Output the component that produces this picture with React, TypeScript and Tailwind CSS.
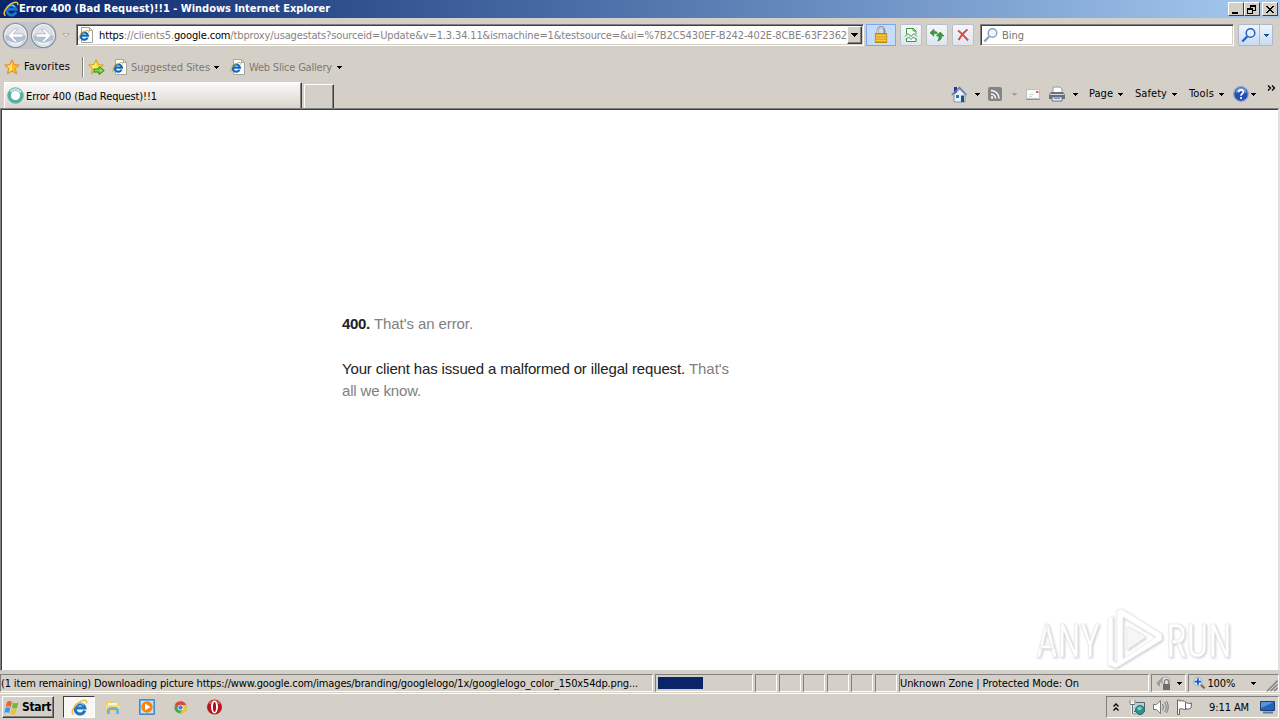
import React, { useLayoutEffect, useRef, useState } from 'react';

const ADDRESS_REST = '/tbproxy/usagestats?sourceid=Update&v=1.3.34.11&ismachine=1&testsource=&ui=%7B2C5430EF-B242-402E-8CBE-63F2362';
const SMALL_PANES = [0, 1, 2, 3, 4, 5];

// Spreads its letters so that the text fills a fixed width
const Label = (props: any) => {
  const { width, className = '', children } = props;
  const ref = useRef<HTMLSpanElement>(null);
  const [spacing, setSpacing] = useState(0);

  useLayoutEffect(() => {
    const el = ref.current;
    if (el) {
      const count = (el.textContent || '').length;
      setSpacing((width - (el.getBoundingClientRect().width - spacing * count)) / count);
    }
  }, [width]);

  return (
    <span
      ref={ref}
      className={`inline-block shrink-0 whitespace-pre ${className}`}
      style={{ letterSpacing: `${spacing}px` }}
    >
      {children}
    </span>
  );
};

const Caret = ({ className = '' }: any) => (
  <svg className={`shrink-0 ${className}`} width="6" height="3" viewBox="0 0 6 3" shapeRendering="crispEdges">
    <path d="M0 0h5v1H4v1H3v1H2V2H1V1H0z" fill="currentColor" />
  </svg>
);

const IELogo = ({ size = 16, className = '' }: any) => (
  <svg className={`shrink-0 ${className}`} width={size} height={size} viewBox="0 0 16 16" fill="none">
    <path d="M13 10.8A4.700 4.700 0 1 1 13.100 8.400H5" stroke="#1d74c8" strokeWidth="2.800" />
    <path d="M4.200 6.600A4.500 4.500 0 0 1 12 5.800" stroke="#6cc4f6" strokeWidth="1.300" />
    <path d="M2.600 14.600C-.8 13 2.500 6.500 7.500 3.200 11.400.6 15.600.1 14.600 4.200" stroke="#edc23c" strokeWidth="1.500" />
  </svg>
);

const IEPage = ({ className = '' }: any) => (
  <svg className={`shrink-0 ${className}`} width="16" height="16" viewBox="0 0 16 16" fill="none">
    <path d="M3.500.5h8l3 3v12h-11z" fill="#fdfdfd" stroke="#a5a5a0" />
    <path d="M11.500.5v3h3" stroke="#a5a5a0" />
    <path d="M9.600 10.600A3.600 3.600 0 1 1 9.900 8.600H3.400" stroke="#1767b3" strokeWidth="2.200" />
    <path d="M1.400 13.300C-.6 11.800 2.200 7 5.700 5c3.300-2 6-2 5 .5" stroke="#dfab20" />
  </svg>
);

const Star = ({ plus = false }: any) => (
  <svg className="shrink-0" width="17" height="16" viewBox="0 0 17 16">
    <path d="M8 .8l2.100 4.800 5.200.5-3.900 3.500 1.200 5.200L8 12.100l-4.600 2.700 1.200-5.200L.7 6.100l5.200-.5z" fill={plus ? '#ffe04a' : '#fdb92c'} stroke={plus ? '#cfa310' : '#df8c22'} />
    <path d="M8 2.800v8l-3.200 2 .9-3.700L3 6.800l3.500-.4z" fill="#ffe780" />
    {plus && <path d="M6 10h5V7.500l5.300 4-5.300 4V13H6z" fill="#7ddb4c" stroke="#26881c" />}
  </svg>
);

const TitleButton = ({ children, className = '' }: any) => (
  <div className={`flex h-[14px] w-4 items-center justify-center border border-t-white border-l-white border-r-[#404040] border-b-[#404040] bg-[#d4d0c8] ${className}`}>
    <svg width="12" height="11" viewBox="0 0 12 11" shapeRendering="crispEdges" fill="none" stroke="#000">{children}</svg>
  </div>
);

const TitleBar = () => (
  <div className="flex h-[18px] items-center bg-linear-to-r from-[#0a246a] to-[#a6caf0] pl-[3px] text-white">
    <IELogo />
    <Label width={311} className="font-bold">Error 400 (Bad Request)!!1 - Windows Internet Explorer</Label>
    <div className="mr-[2px] ml-auto flex">
      <TitleButton><path d="M2 9h6" strokeWidth="2" /></TitleButton>
      <TitleButton>
        <path d="M4 1h6M4 2h6M4.500 1v3M9.500 1v6M7 6.500h3M1 4h6M1 5h6M1.500 4v6M6.500 4v6M1 9.500h6" />
      </TitleButton>
      <TitleButton className="ml-[2px]">
        <path d="M2 2l7 7M3 2l7 7M9 2L2 9M10 2L3 9" shapeRendering="auto" />
      </TitleButton>
    </div>
  </div>
);

const NavArrow = ({ flip = false }: any) => (
  <svg className={`shrink-0 ${flip ? '-scale-x-100' : ''}`} width="27" height="27" viewBox="0 0 27 27">
    <circle cx="13.500" cy="13.500" r="12" fill="#f3f5f8" stroke="#858c99" strokeWidth="1.200" />
    <path d="M3 13.500a10.500 10.500 0 0 1 21 0z" fill="#dde1e7" />
    <path d="M3 13.500a10.500 10.500 0 0 0 21 0z" fill="#b4bfcf" />
    <path d="M5 18a9.300 9.300 0 0 0 17 0q-8.500 5-17 0z" fill="#e3f1fb" />
    <path d="M5.800 13.500l6.800-6.400h3.200l-4.600 4.700H21v3.400h-9.800l4.600 4.700h-3.200z" fill="#fff" stroke="#a0abbb" strokeWidth=".7" />
  </svg>
);

const ToolButton = ({ children, className = '' }: any) => (
  <div className={`flex h-[22px] w-[22px] shrink-0 items-center justify-center rounded-[2px] border border-[#b8c1ca] bg-linear-to-b from-[#f4f7fa] to-[#dfe6ef] ${className}`}>
    {children}
  </div>
);

const Magnifier = ({ color = '#8ca3b8', fill = '#edf6fc' }: any) => (
  <svg className="shrink-0" width="16" height="16" viewBox="0 0 16 16" fill="none" stroke={color}>
    <path d="M6.200 9.500L1.300 14.500" strokeWidth="2.300" />
    <circle cx="9.500" cy="6" r="4.300" fill={fill} strokeWidth="1.500" />
    <path d="M7.200 6a2.400 2.400 0 0 1 2.300-2.400" stroke="#fff" />
  </svg>
);

const AddressRow = () => (
  <div className="flex h-[34px] items-center pl-[2px]">
    <div className="flex gap-[1px] rounded-full bg-[#c3c4c8]">
      <NavArrow />
      <NavArrow flip />
    </div>
    <svg className="ml-[5px] shrink-0" width="8" height="5" viewBox="0 0 8 5">
      <path d="M.5.5h7L4 4z" fill="#e6e3dd" stroke="#b3afa7" />
    </svg>
    <div className="ml-[6px] flex h-[22px] w-[788px] shrink-0 items-center border border-t-[#808080] border-l-[#808080] border-r-white border-b-white bg-white pl-px shadow-[inset_1px_1px_#404040,inset_-1px_-1px_#d4d0c8]">
      <IEPage />
      <Label width={748} className="ml-[5px] pt-[2px] text-[#85837f]">
        <span className="text-black">https</span>
        ://clients5.
        <span className="text-black">google.com</span>
        {ADDRESS_REST}
      </Label>
      <div className="mr-px ml-auto flex h-[18px] w-[15px] items-center justify-center border border-t-white border-l-white border-r-[#404040] border-b-[#404040] bg-[#d4d0c8] shadow-[inset_-1px_-1px_#808080]">
        <svg width="7" height="4" viewBox="0 0 7 4" shapeRendering="crispEdges">
          <path d="M0 0h7v1H6v1H5v1H4v1H3V3H2V2H1V1H0z" />
        </svg>
      </div>
    </div>
    <div className="ml-[2px] flex h-[22px] w-[30px] shrink-0 items-center justify-center border border-[#7aa7f0] bg-[#c5dcfb]">
      <svg width="14" height="18" viewBox="0 0 16 18" preserveAspectRatio="none" fill="none">
        <path d="M4 9V5a4 4 0 0 1 8 0v4" stroke="#8d8c80" strokeWidth="2.200" />
        <path d="M4 8V5a4 4 0 0 1 7-2.500" stroke="#e2dfd2" />
        <rect x="1.500" y="7.500" width="13" height="9" fill="#e6a817" stroke="#b98818" />
        <path d="M2 9.500h12M2 12h12M2 14.500h12" stroke="#f8cf50" />
      </svg>
    </div>
    <ToolButton className="ml-1">
      <svg width="14" height="16" viewBox="0 0 14 16" fill="none" stroke="#319a3a">
        <path d="M2.500 7V1.500h7L12 4v3M2.500 11v3.500H12V11" fill="#fff" />
        <path d="M9 1.500V4h3" />
        <path d="M1 9.500l3-3 3 3 3-3 3 3M2 12.500l2.500-2.500 2.500 2.500 2.500-2.500 2.500 2.500" />
      </svg>
    </ToolButton>
    <ToolButton className="ml-1">
      <svg width="16" height="16" viewBox="0 0 16 16">
        <path d="M1 5.700L4.800 2v2.200c2.500-.3 3.500.8 3.500 3C7.500 6.300 6.600 6.300 4.800 6.500v2.700z" fill="#369d37" stroke="#22722a" strokeWidth=".5" />
        <path d="M11.200 5l3.800 4h-2.300c.1 2.800-1.300 4.700-4.200 5 1.400-1.300 1.400-2.700 1.300-5H7.400z" fill="#369d37" stroke="#22722a" strokeWidth=".5" />
      </svg>
    </ToolButton>
    <ToolButton className="ml-1">
      <svg width="14" height="14" viewBox="0 0 14 14" fill="none">
        <path d="M2 2.500c3 2 6 5.500 10 10M11.500 1.500C8 4 5 8 2.500 12" stroke="#d34848" strokeWidth="2" />
      </svg>
    </ToolButton>
    <div className="ml-[6px] flex h-[22px] w-[254px] shrink-0 items-center border border-t-[#808080] border-l-[#808080] border-r-white border-b-white bg-white pl-[2px] shadow-[inset_1px_1px_#404040,inset_-1px_-1px_#d4d0c8]">
      <Magnifier />
      <Label width={22} className="ml-[3px] pt-[2px] text-[#77736d]">Bing</Label>
    </div>
    <div className="ml-[4px] flex h-[22px] w-[35px] items-center rounded-[2px] border border-[#adb9cb] bg-linear-to-b from-[#eff4fb] to-[#cbdaf0]">
      <div className="flex h-full w-[21px] items-center justify-center border-r border-[#adb9cb]">
        <Magnifier color="#2460c4" fill="#e3effd" />
      </div>
      <Caret className="ml-[4px] text-[#174b9b]" />
    </div>
  </div>
);

const FavoritesRow = () => (
  <div className="flex h-[30px] items-center pl-1">
    <Star />
    <Label width={46} className="ml-[3px]">Favorites</Label>
    <div className="ml-[12px] h-5 w-[2px] border-l border-[#808080] bg-white" />
    <div className="ml-[4px]"><Star plus /></div>
    <IEPage className="ml-[7px]" />
    <Label width={79} className="ml-[3px] pt-px text-[#7c7973]">Suggested Sites</Label>
    <Caret className="ml-[4px]" />
    <IEPage className="ml-[10px]" />
    <Label width={83} className="ml-[3px] pt-px text-[#7c7973]">Web Slice Gallery</Label>
    <Caret className="ml-[5px]" />
  </div>
);

const CommandBar = () => (
  <div className="mr-[4px] mb-px ml-auto flex h-[26px] items-center">
    <svg width="16" height="17" viewBox="0 0 16 17">
      <path d="M3 8.500L8.500 3 14 8.500V16H3z" fill="#eaf1f8" stroke="#7996b5" />
      <path d="M3 1h3v5L3 8z" fill="#22359b" />
      <path d="M.8 9L8.500 1.500 15.500 9" fill="none" stroke="#5f80a8" strokeWidth="1.500" />
      <path d="M5 9h3v3H5z" fill="#3c6fa3" />
      <path d="M10 9.500h3V16h-3z" fill="#174f86" />
    </svg>
    <Caret className="ml-[8px]" />
    <svg className="ml-[7px]" width="14" height="14" viewBox="0 0 14 14" fill="none" stroke="#fff" strokeWidth="1.500">
      <rect width="14" height="14" rx="2" fill="#858585" stroke="none" />
      <path d="M3 7a4.500 4.500 0 0 1 4.500 4.500M3 3.500a8 8 0 0 1 8 8" />
      <circle cx="4" cy="10.500" r=".5" />
    </svg>
    <Caret className="ml-[10px] text-[#a6a29a]" />
    <svg className="ml-[8px]" width="14" height="11" viewBox="0 0 14 11">
      <path d="M.5.5h13v9H.5z" fill="#fafafa" stroke="#c2bfba" />
      <path d="M0 10.500h14" stroke="#96938e" />
      <path d="M10 2h2.500v2H10z" fill="#db6657" />
      <path d="M3 5.500h5M3 7.500h3" stroke="#d8d8d8" />
    </svg>
    <svg className="ml-[9px]" width="16" height="16" viewBox="0 0 16 16">
      <path d="M4 1h7l2 2v4H4z" fill="#fff" stroke="#929aa3" />
      <path d="M2 6h12l2 3v4H0V9z" fill="#6c7177" />
      <path d="M1 8.500h14" stroke="#d6d9dc" />
      <path d="M3 11h10v4H3z" fill="#e8edf3" stroke="#697585" />
      <path d="M5 12.500h6" stroke="#6999c4" />
    </svg>
    <Caret className="ml-[8px]" />
    <Label width={24} className="ml-[10px]">Page</Label>
    <Caret className="ml-[5px]" />
    <Label width={32} className="ml-[11px]">Safety</Label>
    <Caret className="ml-[5px]" />
    <Label width={25} className="ml-[11px]">Tools</Label>
    <Caret className="ml-[5px]" />
    <svg className="ml-[8px]" width="16" height="16" viewBox="0 0 16 16" fill="none">
      <circle cx="8" cy="8" r="7.300" fill="#254fb1" stroke="#8ba3cf" strokeWidth="1.200" />
      <path d="M2.500 7a5.500 5.500 0 0 1 11 0q-5.500-3-11 0z" fill="#7697df" />
      <path d="M5.700 6.200C5.700 3 10.500 3.300 10.400 5.900 10.300 7.700 8 7.500 8 9.700M8 11v2" stroke="#fff" strokeWidth="1.700" />
    </svg>
    <Caret className="ml-[2px]" />
    <svg className="mb-[13px] ml-[10px]" width="9" height="6" viewBox="0 0 9 6" fill="none" stroke="#000" strokeWidth="1.300">
      <path d="M1 .5L3.500 3 1 5.500M5 .5L7.500 3 5 5.500" />
    </svg>
  </div>
);

const TabRow = () => (
  <div className="flex h-[26px] items-end pl-1">
    <div className="flex h-[26px] w-[298px] items-center border-t border-r border-l border-t-white border-l-white border-r-[#404040] bg-linear-to-b from-[#fbfaf9] to-[#d9d5ce] pl-[2px] shadow-[inset_-1px_0_#808080]">
      <svg className="shrink-0" width="17" height="17" viewBox="0 0 17 17" fill="none">
        <circle cx="8.500" cy="8.500" r="6.200" fill="#fff" stroke="#4fb3a4" strokeWidth="3.200" />
        <path d="M3.500 4.800A6.200 6.200 0 0 1 14 5.500" stroke="#c0e2e0" strokeWidth="2.600" />
        <circle cx="8.500" cy="8.500" r="7.800" stroke="#6f9fae" strokeWidth=".8" />
      </svg>
      <Label width={131} className="ml-[2px] pt-[2px]">Error 400 (Bad Request)!!1</Label>
    </div>
    <div className="ml-[2px] h-[24px] w-[30px] border-t border-r border-l border-t-white border-l-white border-r-[#404040] shadow-[inset_-1px_0_#808080]" />
    <CommandBar />
  </div>
);

const Watermark = () => (
  <svg className="absolute right-0 bottom-0 overflow-visible font-['Roboto',sans-serif] drop-shadow-[1px_1px_1px_rgba(0,0,0,0.2)]" width="243" height="62" viewBox="0 0 243 62">
    <g fill="#fff" stroke="#e6e6e6" strokeWidth=".7">
      <text x="1" y="49" fontSize="46" textLength="64" lengthAdjust="spacingAndGlyphs">ANY</text>
      <text x="131" y="49" fontSize="46" textLength="66" lengthAdjust="spacingAndGlyphs">RUN</text>
      <path d="M82 2l5-1 40 25v6L86 57l-5 3-8-3V11l5-3v45l4 2zM88 9v42l33-22z" fillRule="evenodd" />
      <path d="M92 18v24l19-13z" fill="#f6f6f6" />
    </g>
  </svg>
);

const ErrorPage = () => (
  <div className="relative h-[563px] border-t border-r-2 border-b border-l border-t-[#808080] border-r-[#e3e0da] border-b-[#d4d0c8] border-l-[#808080] bg-white pt-[204px] pl-[341px] font-['Liberation_Sans',sans-serif] text-[15px] leading-[22px] text-[#808080] shadow-[inset_1px_1px_#404040]">
    <p className="mb-[23px] whitespace-nowrap">
      <Label width={28} className="font-bold text-[#222]">400.</Label>
      <Label width={99} className="ml-1">That&apos;s an error.</Label>
    </p>
    <p className="whitespace-nowrap">
      <Label width={343} className="text-[#222]">Your client has issued a malformed or illegal request.</Label>
      <Label width={40} className="ml-1">That&apos;s</Label>
    </p>
    <p><Label width={79}>all we know.</Label></p>
    <Watermark />
  </div>
);

const Pane = ({ children, className = '' }: any) => (
  <div className={`flex h-[18px] shrink-0 items-center border border-t-[#808080] border-l-[#808080] border-r-white border-b-white ${className}`}>
    {children}
  </div>
);

const StatusBar = () => (
  <div className="flex h-[22px] items-end gap-[2px] pb-px">
    <Pane className="w-[653px]">
      <Label width={637} className="pt-px">(1 item remaining) Downloading picture https://www.google.com/images/branding/googlelogo/1x/googlelogo_color_150x54dp.png...</Label>
    </Pane>
    <Pane className="w-[98px] pl-[2px]">
      <div className="h-3 w-[45px] bg-[#0a246a]" />
    </Pane>
    {SMALL_PANES.map((pane) => <Pane key={pane} className="w-[22px]" />)}
    <Pane className="w-[250px]">
      <Label width={179} className="pt-px">Unknown Zone | Protected Mode: On</Label>
    </Pane>
    <Pane className="w-[35px] pl-1">
      <svg width="17" height="15" viewBox="0 0 17 15" fill="none">
        <path d="M1 8l5-5v3h3M3 10V6" stroke="#9a9a9a" strokeWidth="2" />
        <circle cx="10" cy="5" r="4" fill="#eee" stroke="#aaa" />
        <path d="M8.500 8V5.500a2 2 0 0 1 4 0V8" stroke="#888" strokeWidth="1.500" />
        <path d="M7 8h7v6H7z" fill="#6e6e6e" />
      </svg>
      <Caret className="ml-[4px]" />
    </Pane>
    <Pane className="w-[91px] pl-[4px]">
      <svg width="15" height="15" viewBox="0 0 15 15" fill="none">
        <path d="M8 8l5 5" stroke="#8c6d4b" strokeWidth="2.500" />
        <circle cx="5.500" cy="5.500" r="4.700" fill="#e1f0ff" stroke="#7aa8da" />
        <path d="M5.500 2v7M2 5.500h7" stroke="#1959bc" strokeWidth="2" />
      </svg>
      <Label width={28} className="ml-px pt-px">100%</Label>
      <Caret className="ml-[16px]" />
      <svg className="mt-1 ml-[9px]" width="13" height="13" viewBox="0 0 13 13" stroke="#808080" strokeWidth="1.500">
        <path d="M1 13L13 1M5 13l8-8M9 13l4-4" />
      </svg>
    </Pane>
  </div>
);

const Taskbar = () => (
  <div className="flex h-[27px] items-center border-t border-white pl-[2px]">
    <div className="flex h-[22px] w-[52px] items-center border border-t-white border-l-white border-r-[#404040] border-b-[#404040] pl-px shadow-[inset_-1px_-1px_#808080]">
      <svg className="shrink-0" width="16" height="15" viewBox="0 0 16 15">
        <path d="M3 2q2.500-2 5-.2L6.700 7q-2.500-1.500-5 0z" fill="#ea6435" />
        <path d="M9 2.400q2.500 1.800 5.500.1L13 8q-2.500 1.200-5.200-.2z" fill="#76b735" />
        <path d="M1.400 8q2.500-1.500 5 0L5 13q-2.300-1.500-4.700 0z" fill="#3a9be1" />
        <path d="M7.500 8.800q2.700 1.400 5.200.3L11.300 14q-2.500 1.300-5.100-.3z" fill="#f5bc2c" />
      </svg>
      <Label width={29} className="ml-[2px] text-[12px] font-bold">Start</Label>
    </div>
    <div className="ml-[9px] flex h-[22px] w-8 items-center justify-center border border-t-[#404040] border-l-[#404040] border-r-white border-b-white bg-[#f8f7f5]">
      <IELogo size={17} />
    </div>
    <svg className="ml-[10px]" width="16" height="16" viewBox="0 0 16 16">
      <path d="M1 2h6l1 2h6v8H1z" fill="#f2cf64" />
      <path d="M3 4h9v4H3z" fill="#fff8cc" />
      <path d="M1 6h14v5H1z" fill="#f8dc82" />
      <path d="M2 15v-5l3-2h6l3 2v5h-3v-4H5v4z" fill="#6fb4dc" />
    </svg>
    <svg className="ml-[18px]" width="16" height="16" viewBox="0 0 16 16">
      <path d="M.5.5h15v15H.5z" fill="#72aadd" stroke="#4c87bd" />
      <path d="M2 2h12v12H2z" fill="#c7e3f8" />
      <circle cx="8" cy="8" r="5.700" fill="#ef8515" />
      <path d="M6 4.500v7L11.500 8z" fill="#fff" />
    </svg>
    <svg className="ml-[19px]" width="13" height="13" viewBox="0 0 16 16">
      <circle cx="8" cy="8" r="7.500" fill="#43a852" />
      <path d="M1.500 4.300A7.500 7.500 0 0 1 15 5H8L5 9.500z" fill="#df4634" />
      <path d="M15 5a7.500 7.500 0 0 1-7.500 10.500L11 9l-1-4z" fill="#f5c52e" />
      <circle cx="8" cy="8" r="3.500" fill="#fff" />
      <circle cx="8" cy="8" r="2.700" fill="#4584df" />
    </svg>
    <svg className="ml-[20px]" width="15" height="16" viewBox="0 0 15 16">
      <circle cx="7.500" cy="8" r="7.500" fill="#b91520" />
      <path d="M1.500 5a6.500 6.500 0 0 1 12 0z" fill="#dc5050" />
      <ellipse cx="7.500" cy="8" rx="3.500" ry="6.500" fill="#fff" />
      <ellipse cx="7.500" cy="8" rx="1.500" ry="5" fill="#9e101a" />
    </svg>
    <div className="mr-px ml-auto flex h-[22px] w-[173px] items-center border border-t-[#808080] border-l-[#808080] border-r-white border-b-white">
      <svg className="ml-[6px]" width="6" height="9" viewBox="0 0 6 9" fill="none" stroke="#000" strokeWidth="1.300">
        <path d="M.5 3.500L3 1l2.500 2.500M.5 7.500L3 5l2.500 2.500" />
      </svg>
      <svg className="ml-[10px]" width="17" height="17" viewBox="0 0 17 17" fill="none">
        <path d="M4.500 3.500h11v9h-11z" fill="#b4d4d9" stroke="#526772" />
        <path d="M1.500 1v4h4V1M3.500 5v10h4" stroke="#fff" strokeWidth="2.500" />
        <path d="M1 1v4.500h5V1M3.500 6v9h4" stroke="#67716f" />
        <circle cx="11" cy="11" r="4.500" fill="#2a9189" stroke="#2b6d68" />
        <path d="M8 9q3-3 5 0-1 3-4 2z" fill="#80d4ba" />
      </svg>
      <svg className="ml-[6px]" width="17" height="16" viewBox="0 0 17 16" fill="none" stroke="#777">
        <path d="M1.500 5.500h3l4-4v13l-4-4h-3z" fill="#fff" />
        <path d="M10.500 5q2 3 0 6M12.500 3q3.500 5 0 10M14.500 2q3.500 6 0 12" />
      </svg>
      <svg className="ml-[7px]" width="17" height="16" viewBox="0 0 17 16" fill="#fff" stroke="#666">
        <path d="M1.500 1v14.500h2V10c3-1 4 1 6.500.5V9.500c2 1 4 .5 5-.5l.5-5c-2 .8-3.500.5-5.500-.5C8 1.500 6 1.500 3.500 2V1z" />
        <path d="M9.500 3.500v6.500" fill="none" />
      </svg>
      <Label width={40} className="ml-[16px] pt-px">9:11 AM</Label>
      <svg className="ml-[11px]" width="15" height="14" viewBox="0 0 15 14">
        <path d="M.5 1.500h14v9H.5z" fill="#2264ba" stroke="#233e70" />
        <path d="M1 2h13L1 8z" fill="#5694dc" />
        <path d="M3 12.500h10" stroke="#587ba6" strokeWidth="2" />
      </svg>
    </div>
  </div>
);

const App = () => (
  <div className="flex h-[720px] w-[1280px] flex-col overflow-hidden bg-[#d4d0c8] font-['DejaVu_Sans_Condensed','DejaVu_Sans',sans-serif] text-[11px] leading-[14px] text-black [font-stretch:condensed]">
    <TitleBar />
    <AddressRow />
    <FavoritesRow />
    <TabRow />
    <ErrorPage />
    <StatusBar />
    <Taskbar />
  </div>
);

export default App;
